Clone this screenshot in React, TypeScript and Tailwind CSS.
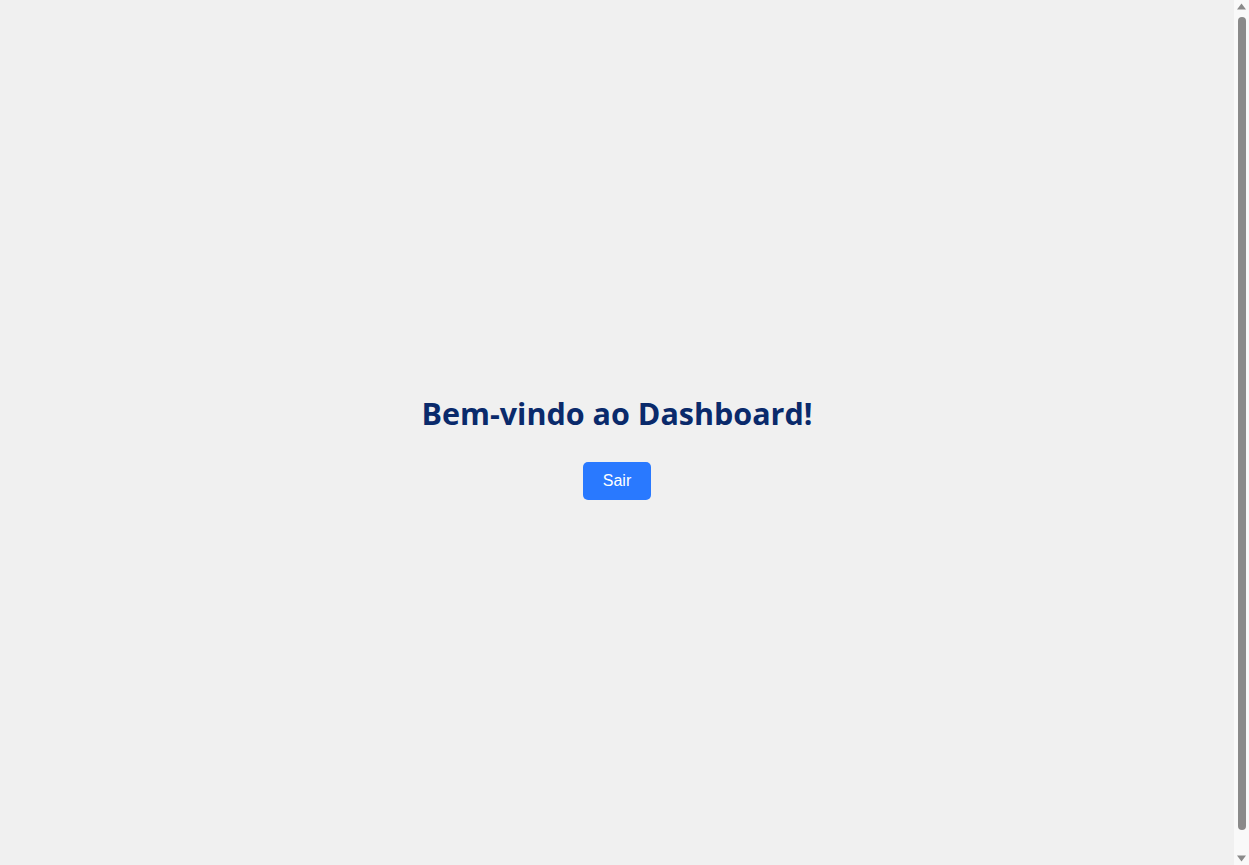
function Scrollbar() {
  return (
    <div className="fixed top-0 right-0 h-screen w-[15px] bg-[#f9f9f9] flex flex-col items-center">
      <svg width="9" height="15" viewBox="0 0 9 15" className="shrink-0">
        <path d="M0 9.5 L4.5 3.5 L9 9.5 Z" fill="#8a8a8a" />
      </svg>
      <div className="flex-1 w-[8px] rounded-full bg-[#8a8a8a] mt-[2px] mb-[20px]" />
      <svg width="9" height="15" viewBox="0 0 9 15" className="shrink-0">
        <path d="M0 5.5 L4.5 11.5 L9 5.5 Z" fill="#8a8a8a" />
      </svg>
    </div>
  );
}

export default function App() {
  return (
    <div className="bg-[#f0f0f0] py-2 pr-[15px]">
      <div className="h-screen pt-3 flex flex-col items-center justify-center">
        <h1
          className="text-[30.5px] font-bold text-[#0a2a6b] leading-[1.33]"
          style={{ fontFamily: '"Open Sans", "Noto Sans", sans-serif' }}
        >
          Bem-vindo ao Dashboard!
        </h1>
        <button
          className="mt-[29px] bg-[#2979ff] text-white text-base px-5 py-[10px] rounded-[5px] leading-[18px]"
          style={{ fontFamily: '"Liberation Sans", Arial, sans-serif' }}
        >
          Sair
        </button>
      </div>
      <Scrollbar />
    </div>
  );
}
